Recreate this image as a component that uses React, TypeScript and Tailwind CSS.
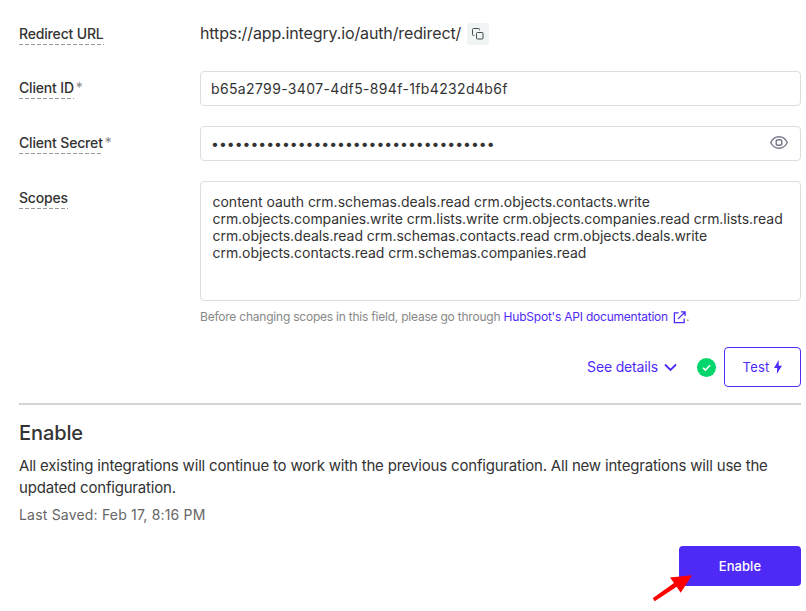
import type { ReactNode } from "react";

function Label({ children, required = false }: { children: ReactNode; required?: boolean }) {
  return (
    <div className="flex w-[181px] shrink-0 items-start text-[14px] leading-5 font-medium text-[#333]">
      <div>
        <div className="tracking-[-0.17px] whitespace-nowrap">{children}</div>
        <div className="h-px bg-[repeating-linear-gradient(90deg,#999_0_4px,transparent_4px_6px)]" />
      </div>
      {required && <span className="ml-[2px] font-normal text-[#888]">*</span>}
    </div>
  );
}

function CopyIcon() {
  return (
    <svg width="12" height="12" viewBox="0 0 12 12" fill="none" stroke="#454b4b" strokeWidth="1">
      <rect x="4.500" y="4.500" width="6.500" height="6.500" rx="1" />
      <path d="M2.500 7.500H1.500a1 1 0 0 1-1-1v-5a1 1 0 0 1 1-1h5a1 1 0 0 1 1 1v.8" />
    </svg>
  );
}

function EyeIcon() {
  return (
    <svg className="-mt-[2px]" width="18" height="13" viewBox="0 0 18 13" fill="none" stroke="#77778b" strokeWidth="1.4">
      <path d="M.7 6.500C2.500 2.800 5.500.8 9 .8s6.500 2 8.300 5.700C15.500 10.200 12.500 12.200 9 12.200S2.500 10.200.7 6.500Z" />
      <rect x="6.200" y="3.700" width="5.600" height="5.600" rx="1.800" />
    </svg>
  );
}

export default function App() {
  return (
    <main className="h-[611px] w-[806px] overflow-hidden bg-white pr-[5px] pl-[19px] font-['Inter',sans-serif] text-[#333]">
      <div className="flex h-[71px] pt-6">
        <Label>Redirect URL</Label>
        <div className="-mt-px flex h-[22px] items-center">
          <span className="-mt-[2px] text-[16px] leading-[22px] tracking-[-0.13px] whitespace-nowrap">https://app.integry.io/auth/redirect/</span>
          <span className="ml-[6px] flex size-[22px] items-center justify-center rounded-[3px] bg-[#f0f4f4]">
            <CopyIcon />
          </span>
        </div>
      </div>
      <div className="flex h-[55px]">
        <div className="pt-[7px]"><Label required>Client ID</Label></div>
        <div className="flex h-[35px] flex-1 items-center rounded-[4px] border border-[#dededa] px-[10px] text-[14px] tracking-[0.36px]">
          b65a2799-3407-4df5-894f-1fb4232d4b6f
        </div>
      </div>
      <div className="flex h-[55px]">
        <div className="pt-[7px]"><Label required>Client Secret</Label></div>
        <div className="flex h-[35px] flex-1 items-center justify-between rounded-[4px] border border-[#dededa] pr-[12px] pl-[10px] text-[14px]">
          <span>{"•".repeat(36)}</span>
          <EyeIcon />
        </div>
      </div>
      <div className="flex h-[120px]">
        <div className="pt-[7px]"><Label>Scopes</Label></div>
        <div className="min-w-0 flex-1 rounded-[4px] border border-[#dededa] pt-[11px] pl-[11.500px] text-[14px] leading-[17px] tracking-[-0.047px] whitespace-nowrap">
          <p className="tracking-[-0.010px]">content oauth crm.schemas.deals.read crm.objects.contacts.write</p>
          <p>crm.objects.companies.write crm.lists.write crm.objects.companies.read crm.lists.read</p>
          <p>crm.objects.deals.read crm.schemas.contacts.read crm.objects.deals.write</p>
          <p>crm.objects.contacts.read crm.schemas.companies.read</p>
        </div>
      </div>
      <div className="ml-[181px] flex h-[46px] items-start pt-[7px] text-[12px] leading-[18px] tracking-[-0.220px] whitespace-nowrap text-[#888]">
        <span>Before changing scopes in this field, please go through</span>
        <a className="ml-[3.300px] flex items-center text-[#4f2af7]">
          HubSpot's API documentation
          <svg className="ml-[5px]" width="13" height="13" viewBox="0 0 14 14" fill="none" stroke="currentColor" strokeWidth="1.4">
            <path d="M6 2H1.500v10.500H12V8M8.500 1H13v4.500M13 1 5.500 8.500" />
          </svg>
        </a>
        <span>.</span>
      </div>
      <div className="flex h-[40px] items-center justify-end text-[14px] text-[#4f2af7]">
        <span className="-mt-px tracking-[-0.160px]">See details</span>
        <svg className="ml-[6px]" width="13" height="9" viewBox="0 0 13 9" fill="none" stroke="currentColor" strokeWidth="1.800">
          <path d="m1 1.500 5.500 5.500L12 1.500" />
        </svg>
        <svg className="mt-[1px] ml-[19.500px]" width="19" height="19" viewBox="0 0 19 19" fill="none">
          <circle cx="9.500" cy="9.500" r="9.500" fill="#00d66b" />
          <path d="m6 9.700 2.400 2.400 4.700-4.800" stroke="#fff" strokeWidth="1.500" />
        </svg>
        <button className="ml-[8.500px] flex h-10 w-[77px] items-center justify-center rounded-[4px] border border-[#4f2af7] text-[13px] tracking-[0.2px]">
          <span className="mt-[2px]">Test</span>
          <svg className="ml-[5px]" width="8" height="14" viewBox="0 0 8 14" fill="currentColor">
            <path d="M4.700 0 0 8h3.200L2.800 14 8 5.800H4.700Z" />
          </svg>
        </button>
      </div>
      <div className="mt-4 h-[2px] bg-[#d4d4d4]" />
      <h1 className="mt-[14px] text-[20px] leading-[28px] font-medium tracking-[-0.1px]">Enable</h1>
      <p className="mt-[8px] text-[15px] leading-[22px] tracking-[-0.192px] whitespace-nowrap">
        All existing integrations will continue to work with the previous configuration. All new integrations will use the<br />updated configuration.
      </p>
      <p className="mt-[6px] text-[14px] leading-5 tracking-[0.190px] text-[#666]">Last Saved: Feb 17, 8:16 PM</p>
      <div className="relative mt-[21px] flex justify-end">
        <button className="h-10 w-[122px] rounded-[4px] bg-[#4f2af7] pt-[2px] text-[13px] font-medium tracking-[0.050px] text-white">Enable</button>
        <svg className="absolute top-[29px] right-[109px]" width="40" height="28" viewBox="0 0 40 28">
          <path d="M40 .2 18 2.500l4 5.500L.7 23.200l2 3 22-14.500 4 6Z" fill="#fe0000" />
        </svg>
      </div>
    </main>
  );
}
